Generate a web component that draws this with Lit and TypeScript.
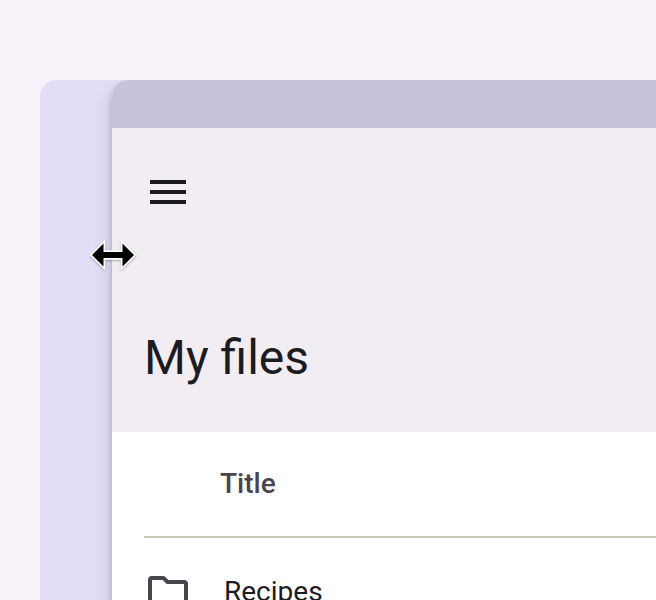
import { LitElement, html, css } from "lit";
import { customElement } from "lit/decorators.js";

@customElement("app-root")
export class AppRoot extends LitElement {
  static styles = css`
    :host {
      display: block;
      height: 100vh;
      box-sizing: border-box;
      padding: 80px 0 0 40px;
      overflow: hidden;
      background: #f7f2fa;
      font-family: "Google Sans", Roboto, "Liberation Sans", sans-serif;
      color: #1c1b1f;
    }
    .backdrop {
      height: 100%;
      box-sizing: border-box;
      padding-left: 72px;
      border-radius: 16px 0 0 0;
      background: #e1dff7;
      position: relative;
      overflow: hidden;
    }
    .window {
      height: 100%;
      border-radius: 16px 0 0 0;
      background: #fff;
      box-shadow: 0 12px 16px 4px rgba(60, 50, 100, 0.12), 0 4px 6px rgba(60, 50, 100, 0.26);
    }
    .titlebar {
      height: 48px;
      border-radius: 16px 0 0 0;
      background: #c6c3dc;
    }
    .header {
      height: 304px;
      box-sizing: border-box;
      padding: 40px 32px 0;
      background: #f2ecf3;
    }
    .menu {
      display: block;
      width: 48px;
      height: 48px;
      padding: 0;
      border: 0;
      background: none;
      color: inherit;
    }
    svg {
      display: block;
      fill: currentColor;
    }
    h1 {
      margin: 112px 0 0;
      font-size: 48px;
      line-height: 60px;
      font-weight: 400;
    }
    table {
      width: calc(100% - 32px);
      margin-left: 32px;
      border-spacing: 0;
      table-layout: fixed;
      font-size: 28px;
      line-height: 40px;
      text-align: left;
    }
    th {
      height: 106px;
      box-sizing: border-box;
      padding: 0 0 0 76px;
      border-bottom: 2px solid #c7c8b6;
      font-weight: 500;
      color: #49454f;
    }
    td {
      padding: 30px 0;
    }
    .file {
      display: flex;
      align-items: center;
      gap: 32px;
    }
    .file svg {
      color: #49454f;
    }
    .cursor {
      position: absolute;
      left: 48px;
      top: 156px;
      color: #000;
      filter: drop-shadow(0 1px 1px rgba(0, 0, 0, 0.3));
    }
  `;

  render() {
    return html`
      <div class="backdrop">
        <main class="window">
          <div class="titlebar"></div>
          <header class="header">
            <button class="menu" aria-label="Menu">
              <svg width="48" height="48" viewBox="0 0 24 24">
                <path d="M3 18h18v-2H3v2zm0-5h18v-2H3v2zm0-7v2h18V6H3z" />
              </svg>
            </button>
            <h1>My files</h1>
          </header>
          <table>
            <thead>
              <tr><th scope="col">Title</th></tr>
            </thead>
            <tbody>
              <tr>
                <td>
                  <div class="file">
                    <svg width="48" height="48" viewBox="0 0 24 24" aria-hidden="true">
                      <path d="M3.8 20q-.75 0-1.275-.525Q2 18.95 2 18.2V5.8q0-.75.525-1.275Q3.05 4 3.8 4h5.6q.375 0 .713.138.337.137.587.387L12.175 6H20.2q.75 0 1.275.525Q22 7.05 22 7.8v10.4q0 .75-.525 1.275Q20.95 20 20.2 20ZM4 18h16V8h-8.65l-2-2H4Z" />
                    </svg>
                    <span>Recipes</span>
                  </div>
                </td>
              </tr>
            </tbody>
          </table>
        </main>
        <svg class="cursor" width="50" height="38" viewBox="0 0 50 38" aria-hidden="true">
          <path
            d="M4 19 15.5 7.5V16H34.500V7.500L46 19 34.500 30.500V22H15.500V30.500Z"
            stroke="#fff" stroke-width="3.4" paint-order="stroke"
          />
        </svg>
      </div>
    `;
  }
}
